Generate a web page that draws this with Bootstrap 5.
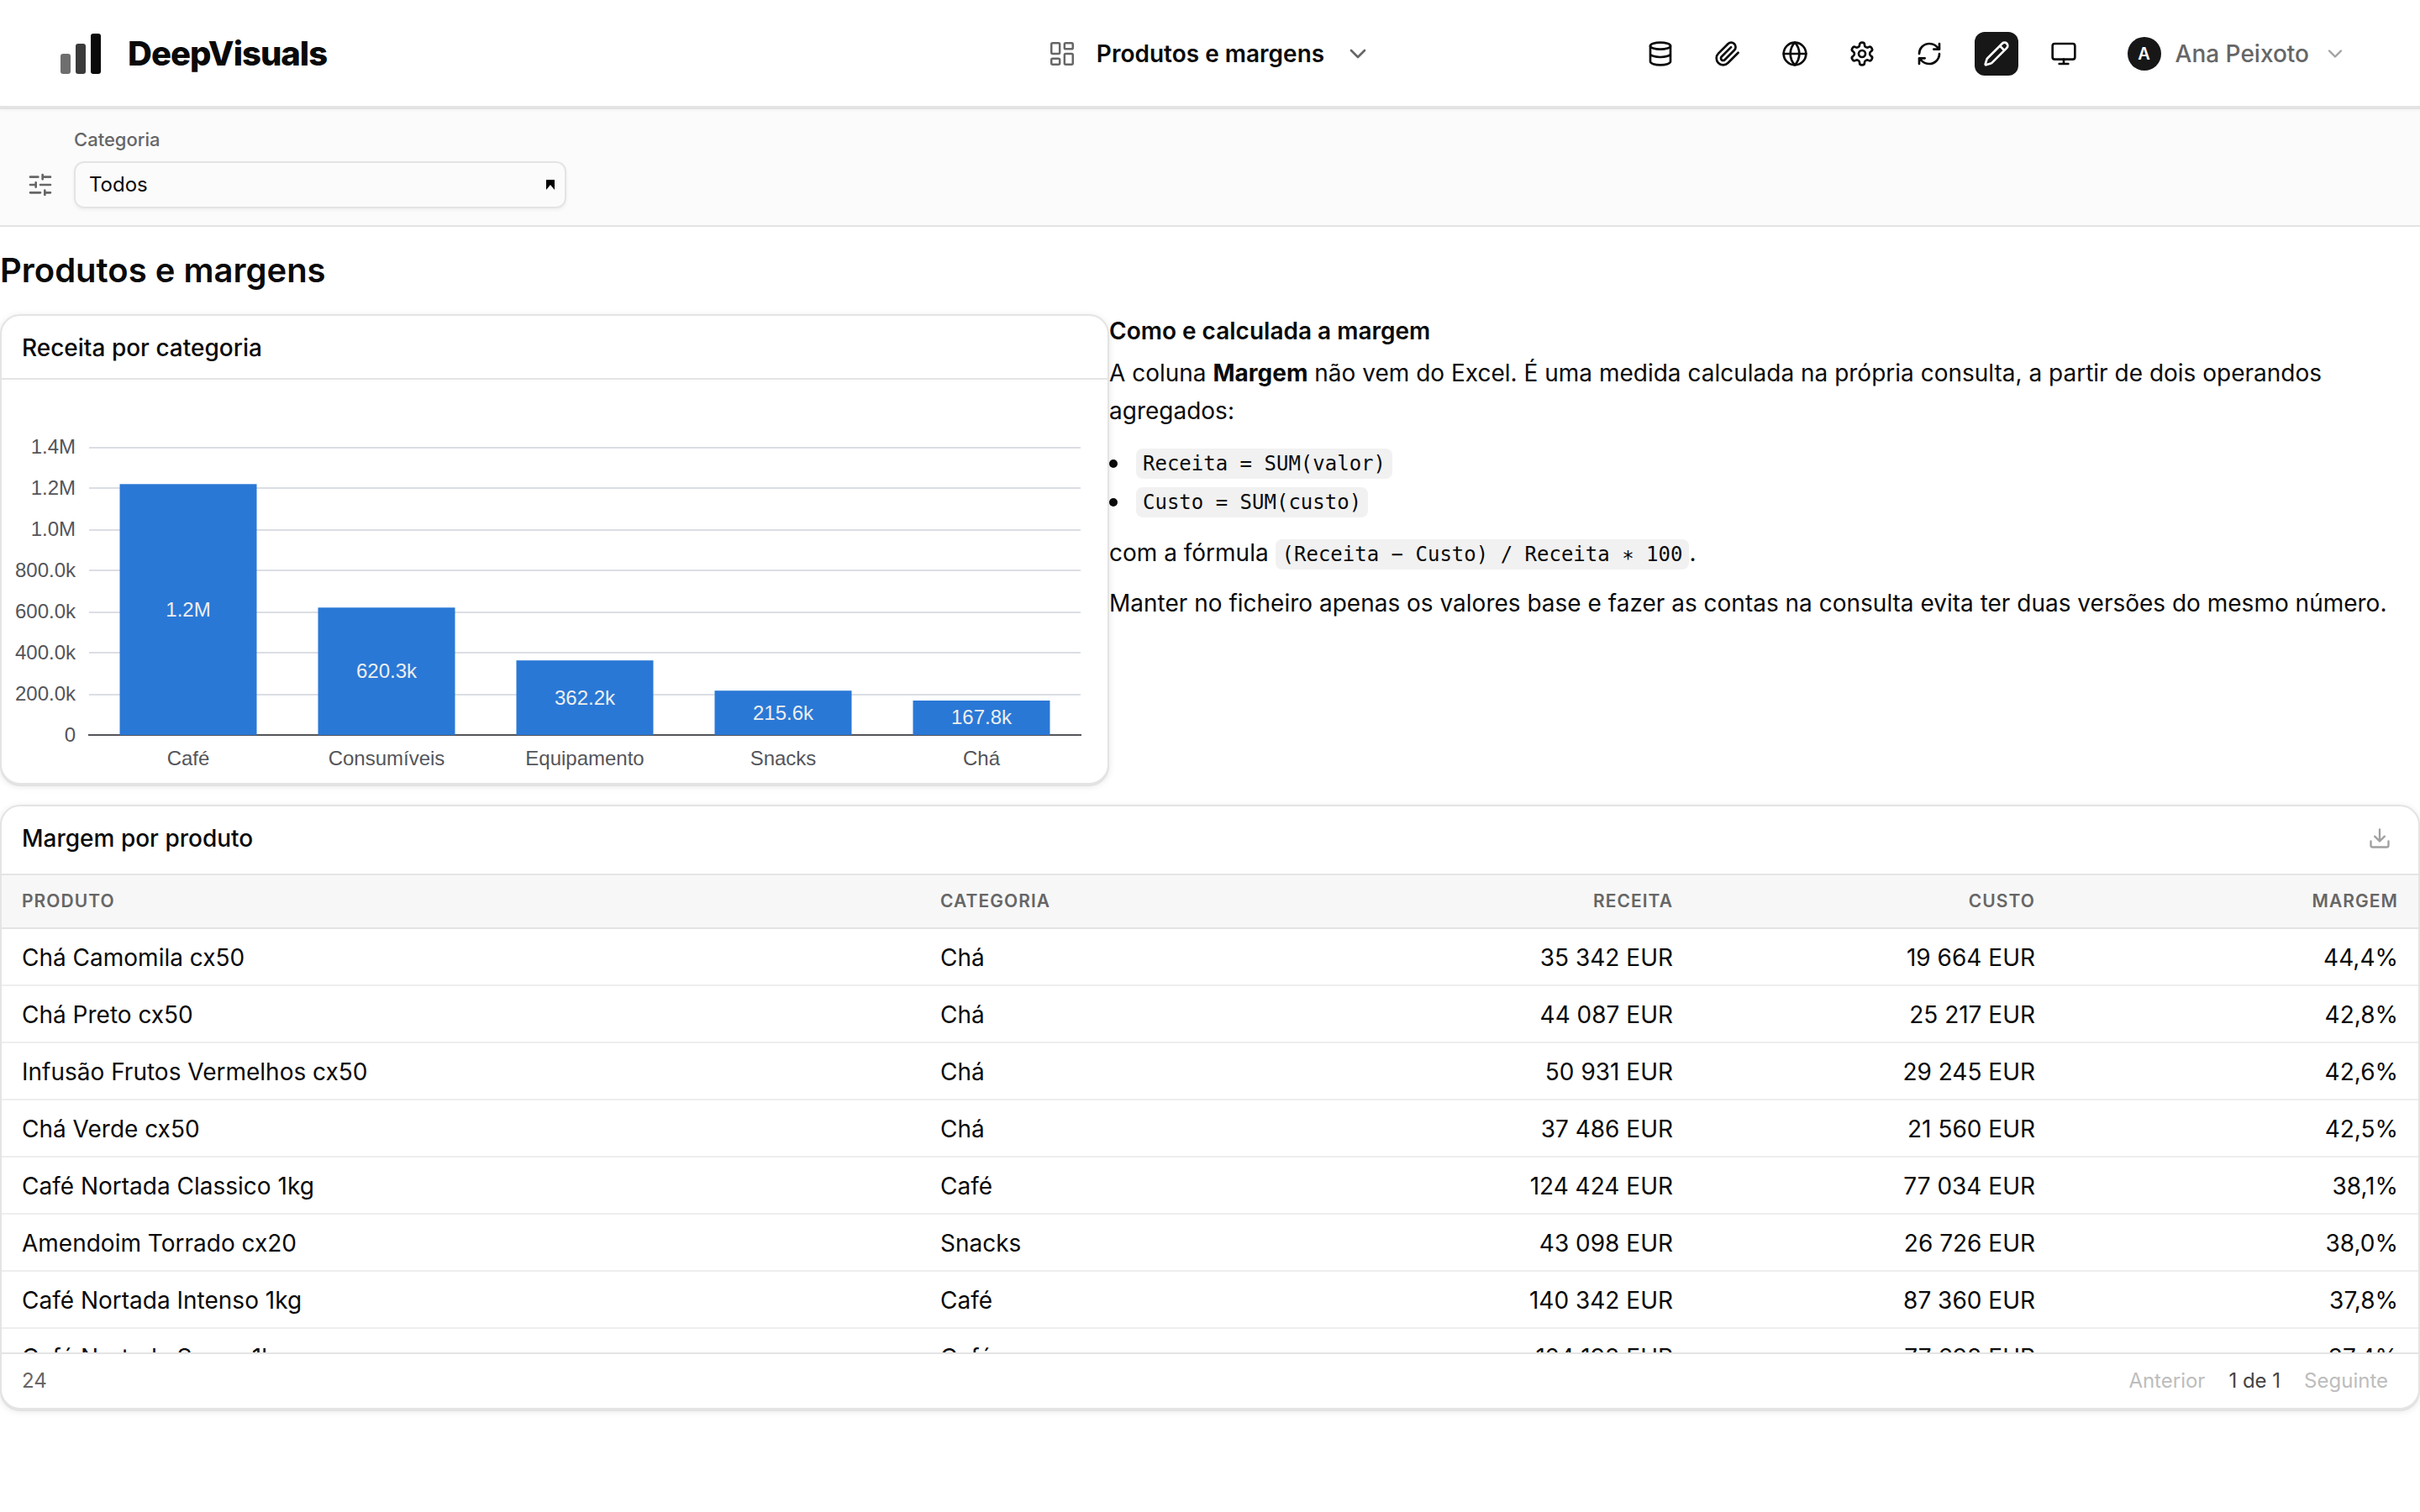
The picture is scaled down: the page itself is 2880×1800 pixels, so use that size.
<!DOCTYPE html>
<html lang="pt">
<head>
<meta charset="utf-8">
<title>DeepVisuals</title>
<meta name="viewport" content="width=device-width, initial-scale=1">
<link rel="stylesheet" href="https://cdn.jsdelivr.net/npm/bootstrap@5.3.0/dist/css/bootstrap.min.css">
<style>
  :root { --ink:#0a0a0a; --muted:#666; --line:#e4e4e4; }
  body { font-family:Inter,"Liberation Sans",sans-serif; font-size:28px; line-height:1.5; color:var(--ink); background:#fff; height:1800px; overflow:hidden; }
  svg.ico { fill:none; stroke:currentColor; stroke-width:2; stroke-linecap:round; stroke-linejoin:round; display:block; flex:none; width:32px; height:32px; }
  .topbar { height:128px; padding:2px 87px 0 86px; border-bottom:2px solid var(--line); box-shadow:0 2px 0 #e2e2e2, 0 2px 6px rgba(0,0,0,.06); z-index:2; display:grid; grid-template-columns:1fr auto 1fr; align-items:center; background:#fff; }
  .brand { margin-left:-14px; }
  .brand-name { font-size:40px; font-weight:800; letter-spacing:-.025em; line-height:1; }
  .page-pick { gap:24px; font-weight:600; }
  .page-pick svg.ico { color:#666; }
  .page-pick svg.grid-ico { width:34px; height:34px; stroke-width:1.75; }
  .tools { gap:28px; }
  .tool-btn { width:52px; height:52px; border-radius:12px; padding:0; border:0; color:var(--ink); display:flex; align-items:center; justify-content:center; background:none; }
  .tool-btn.on { background:#171717; color:#fff; }
  .user-menu { gap:17px; margin-left:22px; color:var(--muted); }
  .user-name { font-weight:500; }
  svg.ico.soft { color:#a0a0a0; width:28px; height:28px; }
  .avatar { width:40px; height:40px; font-size:20px; font-weight:600; background:#171717; color:#fff; }
  .filters { height:142px; background:#fbfbfb; border-bottom:2px solid var(--line); padding:20px 32px 20px; gap:24px; }
  .filters label { font-size:22px; font-weight:500; line-height:34px; color:var(--muted); margin-bottom:9px; display:block; }
  .filters svg.ico { height:56px; color:#666; }
  .pick { width:586px; height:56px; border:2px solid var(--line); border-radius:12px; font-size:24px; padding:0 12px 0 16px; box-shadow:0 2px 4px rgba(0,0,0,.05); }
  .page-title { font-size:40px; font-weight:600; line-height:56px; margin:24px 0 24px; }
  .panel { border:2px solid var(--line); border-radius:24px; background:#fff; box-shadow:0 2px 0 #e2e2e2, 0 2px 8px rgba(0,0,0,.1); overflow:hidden; }
  .panel-title { font-weight:500; padding:0 32px 0 24px; border-bottom:2px solid var(--line); }
  .chart-panel { width:1320px; height:560px; }
  .chart-panel .panel-title { height:76px; padding-top:2px; }
  .chart-panel svg text { font-family:"Liberation Sans",sans-serif; font-size:24px; fill:#54555a; }
  .chart-panel svg .val text { fill:#eee; }
  .note { width:1560px; line-height:44.8px; }
  .note h3 { font-size:28px; font-weight:600; line-height:40px; margin:0 0 8px; }
  .note p { margin:0 0 16px; }
  .note ul { list-style:none; padding:1px 0 0; margin:0 0 15px; }
  .note li { display:flex; align-items:center; height:46px; gap:22px; }
  .note li::before { content:""; width:10px; height:10px; border-radius:50%; background:var(--ink); }
  .note code { font-family:"DejaVu Sans Mono",monospace; font-size:24px; line-height:36px; color:var(--ink); background:#f1f1f1; border-radius:8px; padding:0 8px; display:inline-block; }
  .star { display:inline-block; line-height:1; transform:translateY(5px); }
  .table-panel { height:720px; margin-top:24px; }
  .table-panel .panel-title { height:82px; padding-bottom:4px; }
  .rows { height:568px; overflow:hidden; }
  .rows table { table-layout:fixed; width:100%; margin:0; border-collapse:separate; border-spacing:0; }
  .rows th { height:64px; padding:0 24px; font-size:21px; font-weight:600; letter-spacing:.05em; color:var(--muted); background:#f7f7f7; border-bottom:2px solid var(--line); vertical-align:middle; }
  .rows td { height:68px; padding:2px 24px 0; border-bottom:2px solid #eee; vertical-align:middle; }
  .foot { height:66px; font-size:24px; border-top:2px solid var(--line); padding:0 36px 0 24px; color:var(--muted); }
  .pager { gap:28px; }
  .pg { color:#444; }
  .off { color:#bdbdbd; }
</style>
</head>
<body>
<header class="topbar position-relative">
  <div class="brand d-flex align-items-center">
    <svg width="48" height="48" viewBox="0 0 48 48"><rect y="24" width="12" height="24" rx="3" fill="#6e6e6e"/><rect x="18" y="12" width="12" height="36" rx="3" fill="#3a3a3a"/><rect x="36" width="12" height="48" rx="3" fill="#0a0a0a"/></svg>
    <span class="brand-name ms-4 ps-2">DeepVisuals</span>
  </div>
  <div class="page-pick d-flex align-items-center">
    <svg class="ico grid-ico" viewBox="0 0 24 24"><rect width="7" height="9" x="3" y="3" rx="1"/><rect width="7" height="5" x="14" y="3" rx="1"/><rect width="7" height="9" x="14" y="12" rx="1"/><rect width="7" height="5" x="3" y="16" rx="1"/></svg>
    <span>Produtos e margens</span>
    <svg class="ico" viewBox="0 0 24 24"><path d="m6 9 6 6 6-6"/></svg>
  </div>
  <div class="tools d-flex align-items-center justify-content-end">
    <button class="tool-btn"><svg class="ico" viewBox="0 0 24 24"><ellipse cx="12" cy="5" rx="9" ry="3"/><path d="M3 5v14a9 3 0 0 0 18 0V5M3 12a9 3 0 0 0 18 0"/></svg></button>
    <button class="tool-btn"><svg class="ico" viewBox="0 0 24 24"><path d="m21.44 11.05-9.19 9.19a6 6 0 0 1-8.49-8.49l8.57-8.57A4 4 0 1 1 18 8.84l-8.59 8.57a2 2 0 0 1-2.83-2.83l8.49-8.48"/></svg></button>
    <button class="tool-btn"><svg class="ico" viewBox="0 0 24 24"><circle cx="12" cy="12" r="10"/><path d="M12 2a14.5 14.5 0 0 0 0 20 14.5 14.5 0 0 0 0-20M2 12h20"/></svg></button>
    <button class="tool-btn"><svg class="ico" viewBox="0 0 24 24"><path d="M12.22 2h-.44a2 2 0 0 0-2 2v.18a2 2 0 0 1-1 1.73l-.43.25a2 2 0 0 1-2 0l-.15-.08a2 2 0 0 0-2.73.73l-.22.38a2 2 0 0 0 .73 2.73l.15.1a2 2 0 0 1 1 1.72v.51a2 2 0 0 1-1 1.74l-.15.09a2 2 0 0 0-.73 2.73l.22.38a2 2 0 0 0 2.73.73l.15-.08a2 2 0 0 1 2 0l.43.25a2 2 0 0 1 1 1.73V20a2 2 0 0 0 2 2h.44a2 2 0 0 0 2-2v-.18a2 2 0 0 1 1-1.73l.43-.25a2 2 0 0 1 2 0l.15.08a2 2 0 0 0 2.73-.73l.22-.39a2 2 0 0 0-.73-2.73l-.15-.08a2 2 0 0 1-1-1.74v-.5a2 2 0 0 1 1-1.74l.15-.09a2 2 0 0 0 .73-2.73l-.22-.38a2 2 0 0 0-2.73-.73l-.15.08a2 2 0 0 1-2 0l-.43-.25a2 2 0 0 1-1-1.73V4a2 2 0 0 0-2-2z"/><circle cx="12" cy="12" r="3"/></svg></button>
    <button class="tool-btn"><svg class="ico" viewBox="0 0 24 24"><path d="M3 12a9 9 0 0 1 9-9 9.75 9.75 0 0 1 6.74 2.74L21 8M21 3v5h-5M21 12a9 9 0 0 1-9 9 9.75 9.75 0 0 1-6.74-2.74L3 16M8 16H3v5"/></svg></button>
    <button class="tool-btn on"><svg class="ico" viewBox="0 0 24 24"><path d="M21.174 6.812a1 1 0 0 0-3.986-3.987L3.842 16.174a2 2 0 0 0-.5.83l-1.321 4.352a.5.5 0 0 0 .623.622l4.353-1.32a2 2 0 0 0 .83-.497zM15 5l4 4"/></svg></button>
    <button class="tool-btn"><svg class="ico" viewBox="0 0 24 24"><rect width="20" height="14" x="2" y="3" rx="2"/><path d="M8 21h8M12 17v4"/></svg></button>
    <div class="user-menu d-flex align-items-center">
      <span class="avatar rounded-circle d-flex align-items-center justify-content-center">A</span>
      <span class="user-name">Ana Peixoto</span>
      <svg class="ico soft" viewBox="0 0 24 24"><path d="m6 9 6 6 6-6"/></svg>
    </div>
  </div>
</header>
<section class="filters d-flex align-items-end">
  <svg class="ico" viewBox="0 0 24 24"><path d="M10 5H3M12 19H3M14 3v4M16 17v4M21 12h-9M21 19h-5M21 5h-7M8 10v4M8 12H3"/></svg>
  <div>
    <label>Categoria</label>
    <div class="pick d-flex align-items-center justify-content-between"><span>Todos</span><svg width="10" height="12" viewBox="0 0 10 12"><path d="M0 0h10v12L5 6 0 12z"/></svg></div>
  </div>
</section>
<main>
  <h1 class="page-title">Produtos e margens</h1>
  <div class="d-flex">
    <section class="panel chart-panel flex-shrink-0">
      <div class="panel-title d-flex align-items-center">Receita por categoria</div>
      <svg width="1316" height="480" viewBox="2 452 1316 480">
        <g stroke="#dbdee4" stroke-width="2"><path d="M106 533H1286M106 581H1286M106 631H1286M106 679H1286M106 729H1286M106 777H1286M106 827H1286"/></g>
        <path d="M105 875H1287" stroke="#54555a" stroke-width="2"/>
        <g fill="#2a78d6"><rect x="142.500" y="576.300" width="163" height="298.700"/><rect x="378.500" y="723.300" width="163" height="151.700"/><rect x="614.500" y="786.200" width="163" height="88.800"/><rect x="850.500" y="822.200" width="163" height="52.800"/><rect x="1086.500" y="834" width="163" height="41"/></g>
        <g text-anchor="end"><text x="90" y="540">1.4M</text><text x="90" y="589">1.2M</text><text x="90" y="638">1.0M</text><text x="90" y="687">800.0k</text><text x="90" y="736">600.0k</text><text x="90" y="785">400.0k</text><text x="90" y="834">200.0k</text><text x="90" y="883">0</text></g>
        <g text-anchor="middle"><text x="224" y="911">Café</text><text x="460" y="911">Consumíveis</text><text x="696" y="911">Equipamento</text><text x="932" y="911">Snacks</text><text x="1168" y="911">Chá</text></g>
        <g class="val" text-anchor="middle"><text x="224" y="734">1.2M</text><text x="460" y="807">620.3k</text><text x="696" y="839">362.2k</text><text x="932" y="857">215.6k</text><text x="1168" y="862">167.8k</text></g>
      </svg>
    </section>
    <section class="note">
      <h3>Como e calculada a margem</h3>
      <p>A coluna <b>Margem</b> não vem do Excel. É uma medida calculada na própria consulta, a partir de dois operandos agregados:</p>
      <ul><li><code>Receita = SUM(valor)</code></li><li><code>Custo = SUM(custo)</code></li></ul>
      <p>com a fórmula <code>(Receita − Custo) / Receita <span class="star">*</span> 100</code>.</p>
      <p>Manter no ficheiro apenas os valores base e fazer as contas na consulta evita ter duas versões do mesmo número.</p>
    </section>
  </div>
  <section class="panel table-panel">
    <div class="panel-title d-flex align-items-center justify-content-between">Margem por produto
      <svg class="ico soft" viewBox="0 0 24 24"><path d="M12 15V3M21 15v4a2 2 0 0 1-2 2H5a2 2 0 0 1-2-2v-4M7 10l5 5 5-5"/></svg>
    </div>
    <div class="rows">
      <table>
        <colgroup><col style="width:1093px"><col style="width:488px"><col style="width:432px"><col style="width:431px"><col></colgroup>
        <thead><tr><th>PRODUTO</th><th>CATEGORIA</th><th class="text-end">RECEITA</th><th class="text-end">CUSTO</th><th class="text-end">MARGEM</th></tr></thead>
        <tbody>
          <tr><td>Chá Camomila cx50</td><td>Chá</td><td class="text-end">35 342 EUR</td><td class="text-end">19 664 EUR</td><td class="text-end">44,4%</td></tr>
          <tr><td>Chá Preto cx50</td><td>Chá</td><td class="text-end">44 087 EUR</td><td class="text-end">25 217 EUR</td><td class="text-end">42,8%</td></tr>
          <tr><td>Infusão Frutos Vermelhos cx50</td><td>Chá</td><td class="text-end">50 931 EUR</td><td class="text-end">29 245 EUR</td><td class="text-end">42,6%</td></tr>
          <tr><td>Chá Verde cx50</td><td>Chá</td><td class="text-end">37 486 EUR</td><td class="text-end">21 560 EUR</td><td class="text-end">42,5%</td></tr>
          <tr><td>Café Nortada Classico 1kg</td><td>Café</td><td class="text-end">124 424 EUR</td><td class="text-end">77 034 EUR</td><td class="text-end">38,1%</td></tr>
          <tr><td>Amendoim Torrado cx20</td><td>Snacks</td><td class="text-end">43 098 EUR</td><td class="text-end">26 726 EUR</td><td class="text-end">38,0%</td></tr>
          <tr><td>Café Nortada Intenso 1kg</td><td>Café</td><td class="text-end">140 342 EUR</td><td class="text-end">87 360 EUR</td><td class="text-end">37,8%</td></tr>
          <tr><td>Café Nortada Suave 1kg</td><td>Café</td><td class="text-end">124 198 EUR</td><td class="text-end">77 698 EUR</td><td class="text-end">37,4%</td></tr>
        </tbody>
      </table>
    </div>
    <div class="foot d-flex align-items-center justify-content-between">
      <span>24</span>
      <div class="d-flex pager"><span class="off">Anterior</span><span class="pg">1 de 1</span><span class="off">Seguinte</span></div>
    </div>
  </section>
</main>
<script src="https://cdn.jsdelivr.net/npm/bootstrap@5.3.0/dist/js/bootstrap.bundle.min.js"></script>
</body>
</html>
